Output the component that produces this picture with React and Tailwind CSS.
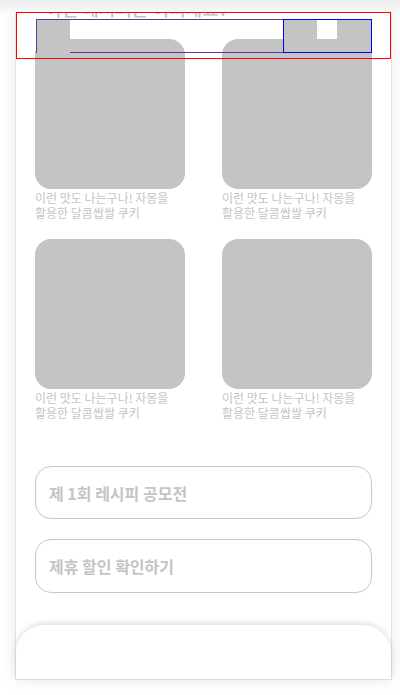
const recipes = [
  { id: 1, title: "이런 맛도 나는구나! 자몽을 활용한 달콤쌉쌀 쿠키" },
  { id: 2, title: "이런 맛도 나는구나! 자몽을 활용한 달콤쌉쌀 쿠키" },
  { id: 3, title: "이런 맛도 나는구나! 자몽을 활용한 달콤쌉쌀 쿠키" },
  { id: 4, title: "이런 맛도 나는구나! 자몽을 활용한 달콤쌉쌀 쿠키" },
];

const font = { fontFamily: '"Noto Sans CJK KR", "Noto Sans", sans-serif' };

function RecipeCard({ title }) {
  return (
    <div className="flex flex-col">
      <div className="w-[150px] h-[150px] rounded-[16px] bg-[#c4c4c4]" />
      <p className="mt-[1px] text-[12px] leading-[15px] text-[#c4c4c4] break-keep">{title}</p>
    </div>
  );
}

// inspector outlines drawn over the top of the list
function DebugOverlay() {
  return (
    <div className="absolute inset-0 pointer-events-none">
      <div className="absolute top-0 inset-x-0 h-[12px] bg-[linear-gradient(to_bottom,#ececec,#f8f8f8)]" />
      <div className="absolute left-[16px] top-[12px] w-[375px] h-[47px] border border-[#ff0000]" />
      <div className="absolute left-[36px] top-[19px] w-[248px] h-[34px] border border-[#5b3a9a]" />
      <div className="absolute left-[283px] top-[19px] w-[89px] h-[34px] border border-[#0000ff]" />
      <div className="absolute left-[37px] top-[20px] w-[33px] h-[33px] bg-[#c4c4c4]" />
      <div className="absolute left-[284px] top-[20px] w-[33px] h-[32px] bg-[#c4c4c4]" />
      <div className="absolute left-[317px] top-[20px] w-[20px] h-[19px] bg-white" />
      <div className="absolute left-[337px] top-[20px] w-[34px] h-[32px] bg-[#c4c4c4]" />
    </div>
  );
}

export default function App() {
  return (
    <div className="relative h-[695px] overflow-hidden bg-white" style={font}>
      <div className="ml-[15px] w-[377px] h-[680px] bg-white border-x border-b border-[#e2e2e2] shadow-[0_0_18px_rgba(0,0,0,0.08)] flex flex-col">
        <div className="px-[19px]">
          <h2 className="-mt-[2px] pl-[10px] text-[18px] leading-[20px] font-medium text-[#c4c4c4]">
            이런 레시피는 어떠세요?
          </h2>
          <div className="mt-[21px] grid grid-cols-2 gap-x-[37px] gap-y-[19px]">
            {recipes.map((r) => (
              <RecipeCard key={r.id} title={r.title} />
            ))}
          </div>
          <div className="mt-[46px] flex flex-col gap-[20px]">
            <button className="h-[53px] rounded-[16px] border border-[#c8c8c8] pl-[13px] text-left text-[16px] font-bold text-[#c4c4c4]">
              제 1회 레시피 공모전
            </button>
            <button className="h-[54px] rounded-[16px] border border-[#c8c8c8] pl-[13px] text-left text-[16px] font-bold text-[#c4c4c4]">
              제휴 할인 확인하기
            </button>
          </div>
        </div>
        <div className="mt-auto h-[54px] rounded-t-[28px] bg-white shadow-[0_-2px_6px_rgba(0,0,0,0.13)]" />
      </div>
      <DebugOverlay />
    </div>
  );
}
